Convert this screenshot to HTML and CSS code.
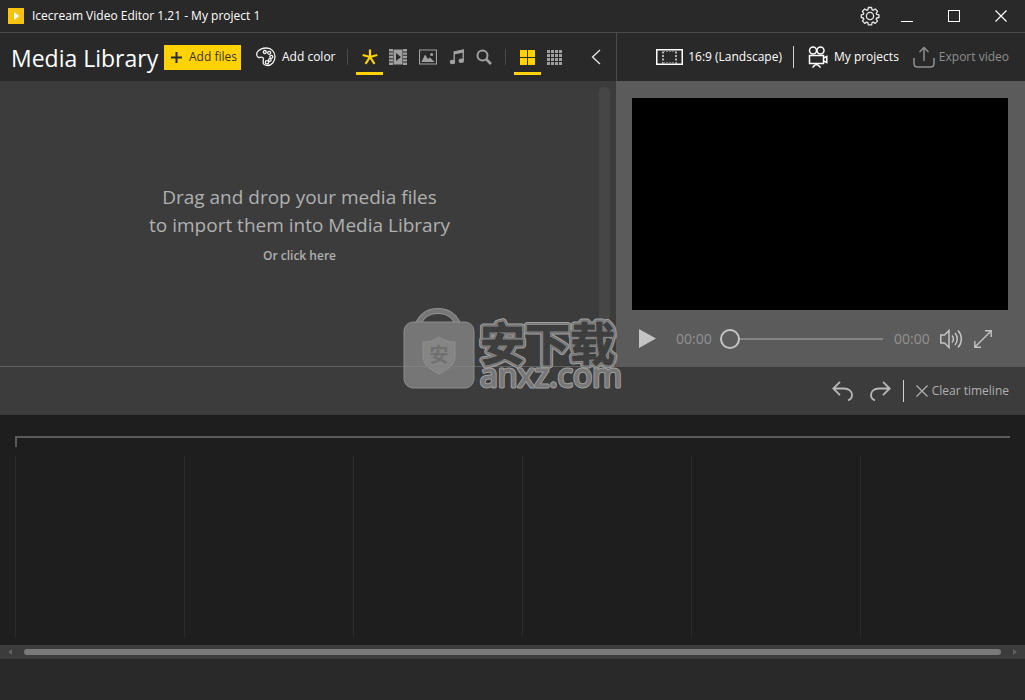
FILE: index.html
```html
<!DOCTYPE html>
<html lang="en">
<head>
<meta charset="utf-8">
<title>Icecream Video Editor 1.21 - My project 1</title>
<link rel="stylesheet" href="styles.css">
</head>
<body>
<div class="app">
  <header class="titlebar">
    <svg class="logo" width="16" height="16" viewBox="0 0 16 16"><rect width="16" height="16" fill="#f6c40f"/><path d="M6 4l5 4-5 4z" fill="#fff"/></svg>
    <span class="window-title">Icecream Video Editor 1.21 - My project 1</span>
    <div class="window-buttons">
      <button aria-label="Settings"><svg width="20" height="20" viewBox="0 0 20 20" fill="none" stroke="#e8e8e8" stroke-width="1.3" stroke-linejoin="round"><path d="M8.4 1.5h3.2l.5 2.3 1.1.5 2-1.3 2.3 2.3-1.3 2 .5 1.1 2.3.5v2.6l-2.3.5-.5 1.1 1.3 2-2.3 2.3-2-1.3-1.1.5-.5 2.3H8.4l-.5-2.3-1.1-.5-2 1.3-2.3-2.3 1.3-2-.5-1.1-2-.5V8.900l2-.5.5-1.100-1.300-2L4.800 3l2 1.300 1.100-.5z"/><circle cx="10" cy="10" r="3.600"/></svg></button>
      <button aria-label="Minimize"><svg width="12" height="12" viewBox="0 0 12 12"><path d="M0 11.500h12" stroke="#fff"/></svg></button>
      <button aria-label="Maximize"><svg width="12" height="12" viewBox="0 0 12 12"><rect x=".5" y=".5" width="11" height="11" fill="none" stroke="#fff"/></svg></button>
      <button aria-label="Close"><svg width="12" height="12" viewBox="0 0 12 12"><path d="M.5.5l11 11M11.500.5l-11 11" stroke="#fff" stroke-width="1.200"/></svg></button>
    </div>
  </header>

  <main class="workspace">
    <section class="library">
      <div class="bar library-bar">
        <h1>Media Library</h1>
        <button class="add-files"><svg width="11" height="11" viewBox="0 0 11 11"><path d="M5.500 0v11M0 5.500h11" stroke="#2a2a2a" stroke-width="2"/></svg>Add files</button>
        <button class="add-color"><svg width="20" height="20" viewBox="0 0 20 20" fill="none" stroke="#f2f2f2" stroke-width="1.300"><path d="M1 5.500C3 2.500 6.500 1 10.500 1 15.500 1 19 5 19 9.800c0 5-3.500 8.700-7.500 8.700-3 0-4.700-1.700-4.300-4 .3-1.900.6-3.200-.5-4-1.200-.9-2.600.2-4 0C1 10.200.3 7.600 1 5.500z"/><circle cx="8.800" cy="5" r="1.500"/><circle cx="13.200" cy="5.800" r="1.500"/><circle cx="15.300" cy="9.800" r="1.500"/><circle cx="13.800" cy="13" r="1.300"/><circle cx="11" cy="15.300" r="1.700"/></svg>Add color</button>
        <span class="rule"></span>
        <div class="filters">
          <button class="tool active" aria-label="All media"><svg width="16" height="16" viewBox="0 0 16 16"><path d="M8 8V.5M8 8l7.300-2M8 8l4.500 6.800M8 8l-4.500 6.800M8 8L.7 6" stroke="#ffd200" stroke-width="2.200"/></svg></button>
          <button class="tool wide" aria-label="Videos"><svg width="18" height="16" viewBox="0 0 18 16"><path d="M4.500 .5h9v15h-9z" fill="#a0a0a0"/><path d="M2 0v16M16 0v16" stroke="#a0a0a0" stroke-width="4" stroke-dasharray="2.400 1"/><path d="M7 4l5 4-5 4z" fill="#292929"/></svg></button>
          <button class="tool wide" aria-label="Images"><svg width="18" height="16" viewBox="0 0 18 16"><path d="M.5 1h17v14H.5z" fill="none" stroke="#a0a0a0" stroke-width="1.200"/><path d="M2.500 13L6 5.500 9 10l2-1.500L15.500 13z" fill="#a0a0a0"/><circle cx="12.700" cy="5.500" r="1.500" fill="#a0a0a0"/></svg></button>
          <button class="tool" aria-label="Audio"><svg width="16" height="16" viewBox="0 0 16 16"><path d="M5.200 13V3l9-2v10.500" fill="none" stroke="#a0a0a0" stroke-width="1.400"/><path d="M5 2.500L15 .5v3L5 5.500z" fill="#a0a0a0"/><ellipse cx="3.500" cy="13" rx="2.700" ry="2.200" fill="#a0a0a0"/><ellipse cx="12.300" cy="11.800" rx="2.700" ry="2.200" fill="#a0a0a0"/></svg></button>
          <button class="tool" aria-label="Search"><svg width="16" height="16" viewBox="0 0 16 16" fill="none" stroke="#a0a0a0"><circle cx="6.500" cy="6.500" r="5" stroke-width="2"/><path d="M10 10l5 5" stroke-width="2.600"/></svg></button>
        </div>
        <span class="rule"></span>
        <div class="filters">
          <button class="tool active" aria-label="Large tiles"><svg width="15" height="15" viewBox="0 0 15 15" fill="#ffd200"><path d="M0 0h7v7H0zM8 0h7v7H8zM0 8h7v7H0zM8 8h7v7H8z"/></svg></button>
          <button class="tool" aria-label="Small tiles"><svg width="15" height="15" viewBox="0 0 15 15" fill="none" stroke="#a0a0a0" stroke-width="3" stroke-dasharray="3 1"><path d="M0 1.500h15M0 5.500h15M0 9.500h15M0 13.500h15"/></svg></button>
        </div>
        <button class="collapse" aria-label="Collapse"><svg width="10" height="16" viewBox="0 0 10 16"><path d="M9 1L1.500 8 9 15" fill="none" stroke="#e8e8e8" stroke-width="1.300"/></svg></button>
      </div>
      <div class="dropzone">
        <div class="drop-text">
          <p class="drop-lead">Drag and drop your media files<br>to import them into Media Library</p>
          <button class="drop-click">Or click here</button>
        </div>
        <div class="vscroll"></div>
      </div>
    </section>

    <section class="preview">
      <div class="bar preview-bar">
        <button class="ratio"><svg width="27" height="16" viewBox="0 0 27 16" fill="none" stroke="#fff"><rect x=".75" y=".75" width="25.500" height="14.500" stroke-width="1.500"/><path d="M7 2.500v12M20 2.500v12" stroke-width="1.300" stroke-dasharray="2 1.500"/><path d="M7 2.500h13M7 13.500h13" stroke="#777" stroke-dasharray="2 1"/></svg>16:9 (Landscape)</button>
        <span class="rule bright"></span>
        <button class="projects"><svg width="20" height="22" viewBox="0 0 20 22" fill="none" stroke="#fff" stroke-width="1.500"><circle cx="5" cy="4.500" r="3.500"/><circle cx="12.500" cy="4.500" r="3.500"/><path d="M1.500 9.500h14v8h-14z"/><path d="M15.500 12l3.300-1.500v6l-3.300-1.500M8.500 17.500v2M7.500 18.500l-3 3M9.500 18.500l3 3"/></svg>My projects</button>
        <button class="export" disabled><svg width="22" height="22" viewBox="0 0 22 22" fill="none" stroke="#8f8f8f" stroke-width="1.500"><path d="M1 12v5.500C1 19.700 2.300 21 4.500 21h13c2.200 0 3.500-1.300 3.500-3.500V12M11 15V1.500M6.500 6L11 1.500 15.500 6"/></svg>Export video</button>
      </div>
      <div class="player">
        <div class="screen"></div>
        <div class="controls">
          <button class="play" aria-label="Play"><svg width="17" height="19" viewBox="0 0 17 19"><path d="M0 0l17 9.500L0 19z" fill="#c4c4c4"/></svg></button>
          <span class="time">00:00</span>
          <input class="seek" type="range" min="0" max="100" value="0" aria-label="Position">
          <span class="time">00:00</span>
          <button class="volume" aria-label="Volume"><svg width="23" height="20" viewBox="0 0 23 20" fill="none" stroke="#c4c4c4" stroke-width="1.500"><path d="M.8 6h3.700L9 1.500v17L4.500 14H.8zM12 6.500c1.600 2 1.600 5 0 7M15 4c3 3.500 3 8.500 0 12M18 1.500c4.500 5 4.500 12 0 17"/></svg></button>
          <button class="fullscreen" aria-label="Full screen"><svg width="18" height="18" viewBox="0 0 18 18" fill="none" stroke="#c4c4c4" stroke-width="1.400"><path d="M1 17L17 1M11 .8h6.200V7M.8 11v6.200H7"/></svg></button>
        </div>
      </div>
    </section>
  </main>

  <div class="timeline-bar">
    <button class="undo" aria-label="Undo"><svg width="21" height="20" viewBox="0 0 21 20" fill="none" stroke="#b8b8b8" stroke-width="1.800"><path d="M8 .8L1.300 7.500 8 14.200M1.300 7.500H12c5 0 8 3 8 6.500 0 2.500-1.500 4.500-4 5.300"/></svg></button>
    <button class="redo" aria-label="Redo"><svg width="21" height="20" viewBox="0 0 21 20" fill="none" stroke="#b8b8b8" stroke-width="1.800"><path d="M13 .8l6.700 6.700L13 14.200M19.700 7.500H9c-5 0-8 3-8 6.500 0 2.500 1.500 4.500 4 5.300"/></svg></button>
    <span class="rule bright"></span>
    <button class="clear"><svg width="12" height="12" viewBox="0 0 12 12"><path d="M.5.5l11 11M11.500.5l-11 11" stroke="#b0b0b0" stroke-width="1.200"/></svg>Clear timeline</button>
  </div>

  <section class="timeline">
    <div class="ruler"></div>
    <div class="tracks"><i></i><i></i><i></i><i></i><i></i><i></i></div>
  </section>
  <div class="hscroll">
    <button aria-label="Scroll left"><svg width="4" height="6" viewBox="0 0 4 6"><path d="M4 0v6L0 3z" fill="#606060"/></svg></button>
    <div class="hthumb"></div>
    <button aria-label="Scroll right"><svg width="4" height="6" viewBox="0 0 4 6"><path d="M0 0v6l4-3z" fill="#606060"/></svg></button>
  </div>
  <footer class="statusbar"></footer>

  <svg class="watermark" width="222" height="90" viewBox="0 0 222 90">
    <g>
      <path d="M15 18C19 8 26 3 36 3s17 5 21 15" fill="none" stroke="#909090" stroke-width="6"/>
      <path d="M15 18C19 8 26 3 36 3s17 5 21 15" fill="none" stroke="#777" stroke-width="4"/>
      <rect x="2" y="14" width="70" height="66" rx="9" fill="#767676" stroke="#8c8c8c"/>
      <path d="M21 34c6 0 12-2 16-5 4 3 10 5 16 5v15c0 8-8 13-16 17-8-4-16-9-16-17z" fill="#858585" stroke="#8e8e8a"/>
      <text class="badge-glyph" x="37" y="54" text-anchor="middle">安</text>
      <path d="M2 58.500h70" stroke="#808080"/>
    </g>
    <defs>
      <text id="brand" class="brand" x="78" y="53">安下载</text>
      <text id="domain" class="domain" x="78" y="79">anxz.com</text>
    </defs>
    <use href="#brand" class="edge"/>
    <use href="#brand" class="band"/>
    <use href="#brand" class="inner-edge"/>
    <use href="#brand" class="core"/>
    <use href="#domain" class="domain-edge"/>
    <use href="#domain" class="domain-fill"/>
  </svg>
</div>
</body>
</html>
```
FILE: styles.css
```css
* { box-sizing: border-box; }

body {
  margin: 0;
  background: #292929;
  color: #fff;
  font: 12px/16px "Open Sans", "Noto Sans", sans-serif;
}

button {
  display: flex;
  align-items: center;
  margin: 0;
  padding: 0;
  border: 0;
  background: none;
  color: inherit;
  font: inherit;
  white-space: nowrap;
}

svg { display: block; flex: none; }

.app {
  position: relative;
  display: flex;
  flex-direction: column;
  min-height: 100vh;
}

.titlebar {
  display: flex;
  align-items: center;
  height: 33px;
  padding: 0 1px 0 8px;
  border-bottom: 1px solid #4a4a4a;
}
.window-title { margin-left: 8px; }
.window-buttons { display: flex; margin-left: auto; }
.window-buttons button {
  justify-content: center;
  width: 47px;
  height: 32px;
}
.window-buttons button:first-child { width: 27px; }
.window-buttons button:nth-child(2) { align-items: flex-end; padding-bottom: 10px; }

.workspace { display: flex; }
.library { flex: 1; display: flex; flex-direction: column; min-width: 0; }
.preview { width: 409px; display: flex; flex-direction: column; }

.bar {
  display: flex;
  align-items: center;
  height: 48px;
}
.library-bar { padding-left: 11px; }
h1 {
  margin: 0;
  padding-top: 2px;
  width: 153px;
  font-size: 23px;
  line-height: 32px;
  font-weight: 400;
  white-space: nowrap;
}
.add-files {
  gap: 7px;
  width: 77px;
  height: 25px;
  padding-left: 7px;
  background: #ffd200;
  color: #3a3320;
}
.add-color { gap: 6px; width: 98px; padding-left: 15px; }
.rule { width: 1px; height: 16px; margin: 0 8px; background: #4a4a4a; }
.rule.bright { height: 22px; background: #d0d0d0; }
.filters { display: flex; }
.tool {
  justify-content: center;
  width: 27px;
  height: 36px;
  border-top: 3px solid transparent;
  border-bottom: 3px solid transparent;
}
.tool.wide { width: 30px; }
.tool.active { border-bottom-color: #ffd200; }
.collapse { margin-left: auto; margin-right: 15px; }

.dropzone {
  flex: 1;
  display: flex;
  padding: 6px 6px 0 0;
  border-bottom: 1px solid #606060;
  background: #3c3c3c;
}
.drop-text {
  flex: 1;
  display: flex;
  flex-direction: column;
  align-items: center;
  padding-top: 96px;
  color: #b0b0b0;
}
.drop-lead {
  margin: 0;
  font-size: 19px;
  line-height: 28px;
  text-align: center;
}
.drop-click { margin-top: 9px; font-weight: 600; }
.vscroll { width: 11px; margin-bottom: 6px; border-radius: 5px; background: #464646; }

.preview-bar {
  justify-content: flex-end;
  padding-right: 16px;
  border-left: 1px solid #4a4a4a;
}
.ratio { gap: 5px; margin-right: 3px; }
.projects { gap: 6px; margin-left: 6px; }
.export { gap: 4px; margin-left: 14px; color: #8f8f8f; }

.player { padding: 17px 17px 0 16px; background: #5b5b5b; }
.screen { aspect-ratio: 376 / 212; background: #000; }
.controls { display: flex; align-items: center; height: 57px; padding: 0 16px 0 7px; }
.time { width: 36px; font-size: 14px; color: #929292; }
.play { width: 37px; }
.seek {
  flex: 1;
  min-width: 0;
  height: 20px;
  margin: 0 11px 0 8px;
  appearance: none;
  background: none;
}
.seek::-webkit-slider-runnable-track { height: 2px; background: #858585; }
.seek::-webkit-slider-thumb {
  appearance: none;
  width: 20px;
  height: 20px;
  margin-top: -9px;
  border: 2px solid #c4c4c4;
  border-radius: 50%;
  background: #5b5b5b;
}
.volume { margin-left: 10px; }
.fullscreen { margin-left: 11px; }

.timeline-bar {
  display: flex;
  align-items: center;
  justify-content: flex-end;
  height: 48px;
  padding-right: 16px;
  background: #3c3c3c;
  color: #b0b0b0;
}
.redo { margin-left: 17px; }
.timeline-bar .rule { margin: 0 12px; }
.clear { gap: 4px; }

.timeline {
  flex: 1;
  display: flex;
  flex-direction: column;
  padding: 21px 15px 8px;
  background: #1e1e1e;
}
.ruler { height: 11px; border: solid #5b5b5b; border-width: 2px 0 0 2px; }
.tracks {
  flex: 1;
  display: grid;
  grid-template-columns: repeat(6, 169px);
  margin-top: 9px;
  overflow: hidden;
}
.tracks i { border-left: 1px solid #2b2b2b; }

.hscroll {
  display: flex;
  align-items: center;
  gap: 12px;
  height: 14px;
  padding: 0 8px;
  background: #3c3c3c;
}
.hthumb { flex: 1; height: 6px; border-radius: 3px; background: #7a7a7a; }
.statusbar { height: 41px; }

.watermark {
  position: absolute;
  left: 402px;
  top: 308px;
  pointer-events: none;
}
.brand {
  font: 700 45px "Noto Sans CJK SC", sans-serif;
  stroke-linejoin: round;
}
.edge { fill: #a0a0a0; stroke: #a0a0a0; stroke-width: 7px; }
.band { fill: #777; stroke: #777; stroke-width: 5px; }
.inner-edge { fill: #989898; stroke: #989898; stroke-width: 2px; }
.core { fill: #3e3e3e; stroke: #3e3e3e; stroke-width: 1px; }
.badge-glyph { font: 700 19px "Noto Sans CJK SC", sans-serif; fill: #707070; }
.domain {
  font: 400 32px "Open Sans", sans-serif;
  stroke-linejoin: round;
}
.domain-edge { fill: #a0a0a0; stroke: #a0a0a0; stroke-width: 3px; }
.domain-fill { fill: #777; stroke: #777; stroke-width: 1px; }
```
